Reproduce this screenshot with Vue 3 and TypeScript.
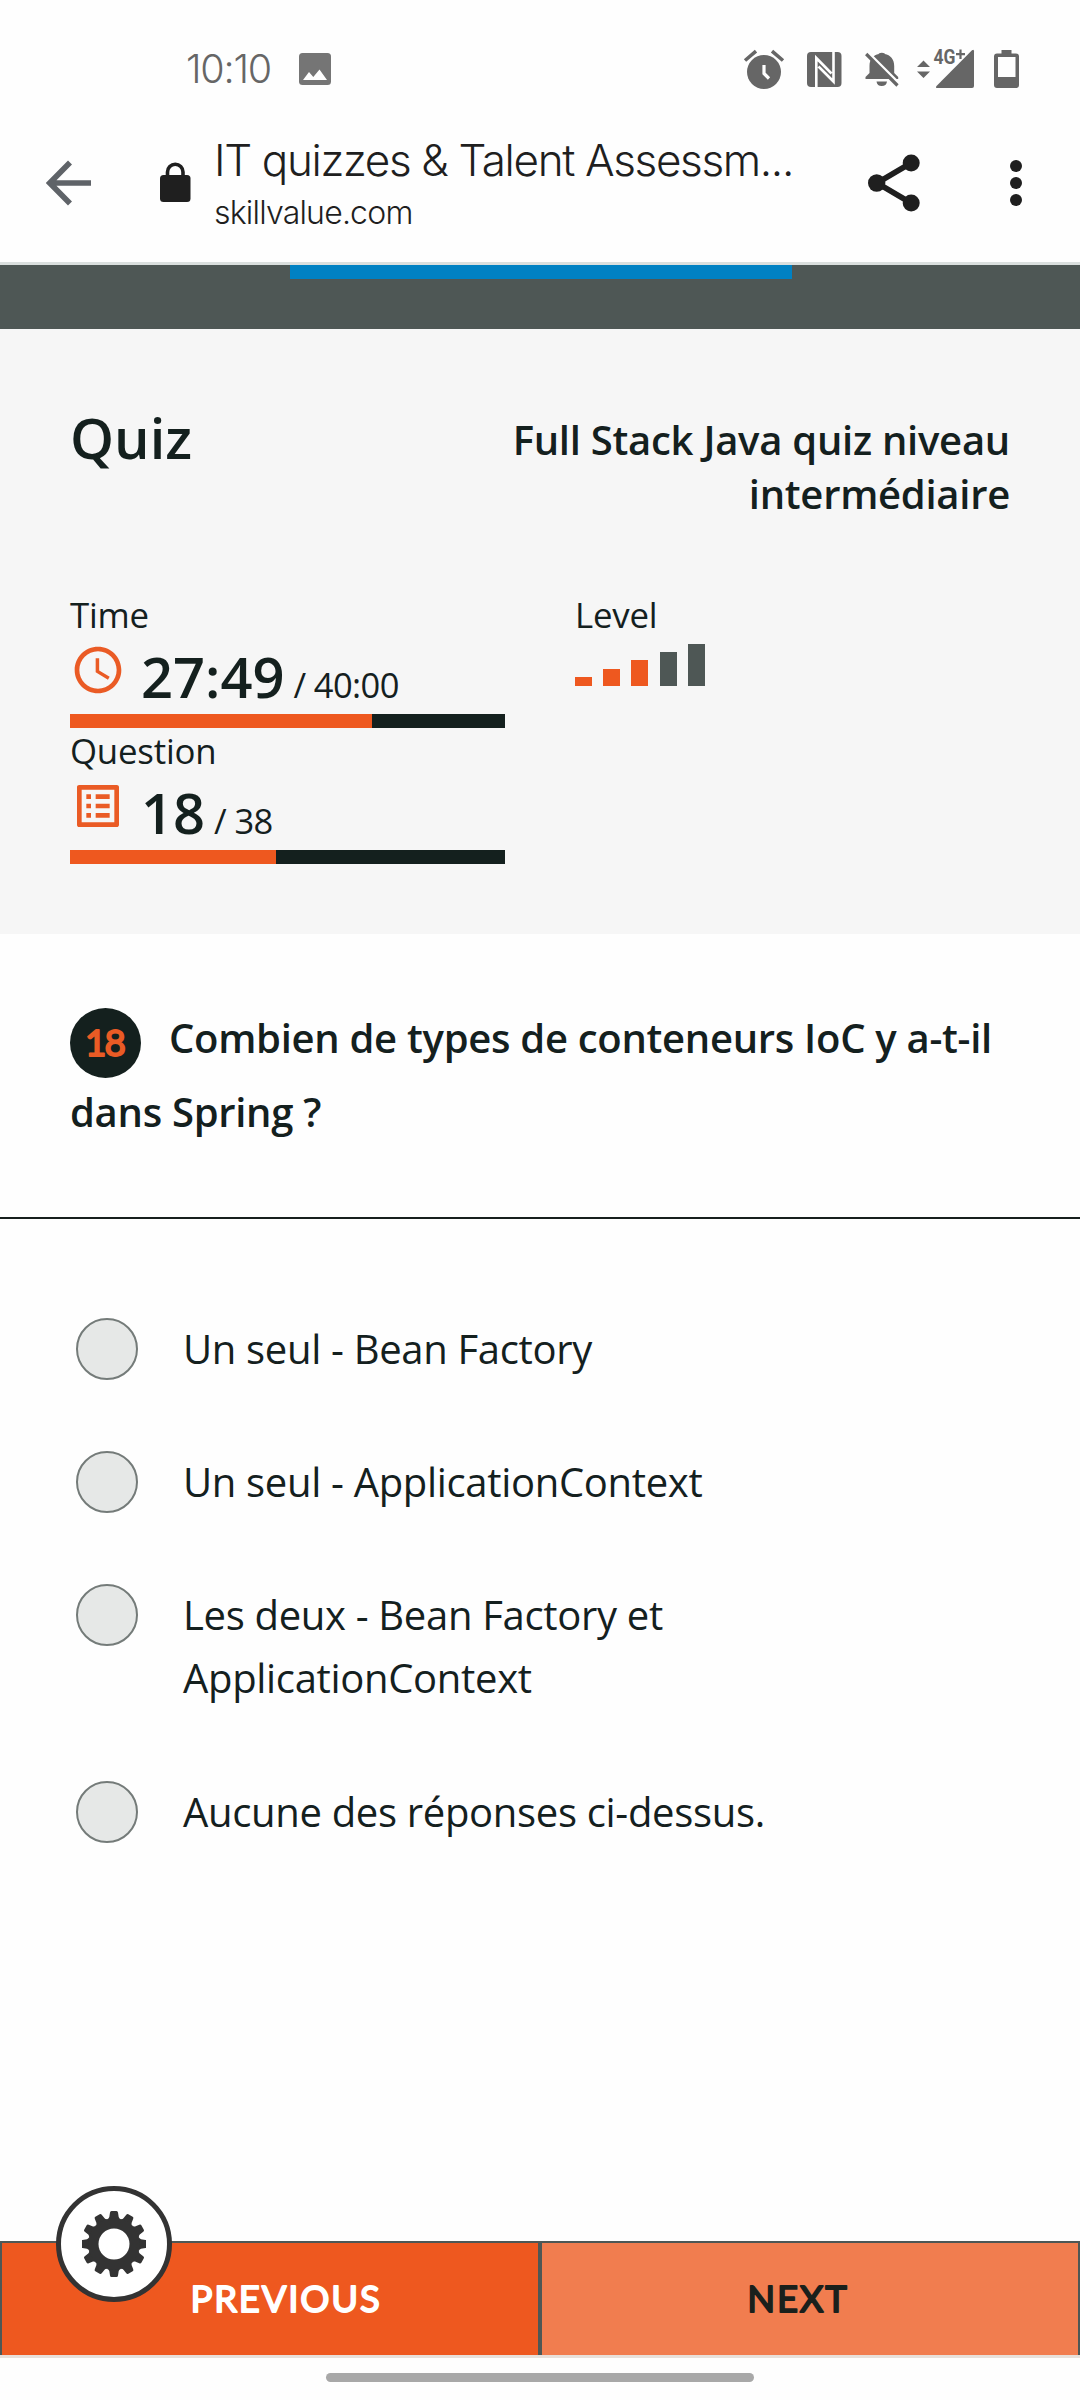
<script setup lang="ts">
interface Stat {
  label: string
  icon: 'clock' | 'list'
  value: string
  total: string
  percent: number
}

const stats: Stat[] = [
  { label: 'Time', icon: 'clock', value: '27:49', total: '40:00', percent: 69.4 },
  { label: 'Question', icon: 'list', value: '18', total: '38', percent: (18 / 38) * 100 },
]

const levels: { height: number; on: boolean }[] = [
  { height: 9, on: true },
  { height: 17, on: true },
  { height: 26, on: true },
  { height: 34, on: false },
  { height: 42, on: false },
]

const answers: string[] = [
  'Un seul - Bean Factory',
  'Un seul - ApplicationContext',
  'Les deux - Bean Factory et ApplicationContext',
  'Aucune des réponses ci-dessus.',
]

const teeth: number[] = Array.from({ length: 12 }, (_, i) => i * 30)
</script>

<template>
  <div class="screen">
    <header class="status">
      <span class="clock">10:10</span>
      <svg class="picture" width="32" height="32" viewBox="0 0 32 32">
        <rect width="32" height="32" rx="3.5" fill="#757575" />
        <path d="M4 27 10 19l4.300 5L20.500 16.500 28 27z" fill="#fff" />
      </svg>
      <svg class="indicators" width="280" height="44" viewBox="742 46 280 44" fill="#666">
        <circle cx="764" cy="72" r="17" />
        <path d="M745 60.500 756 51.200M783 60.500 772 51.200" stroke="#666" stroke-width="3.600" fill="none" />
        <path d="M764 65v8.500l5 5" stroke="#fff" stroke-width="3.200" fill="none" />
        <rect x="807" y="52" width="34.500" height="35" rx="4" />
        <path d="M816.300 87V58L831.500 73.500M833.500 52v29.500L818.500 66.500" stroke="#fff" stroke-width="2.600" fill="none" />
        <path d="M865.500 79v-2l4-4V66c0-7 4-11 9.300-12v-.500q3-1.500 6 0v.500c5.500 1 9.400 5 9.400 12v7l4 4v2zM876.500 81.500h10.500a5.300 5.300 0 0 1-10.500 0z" />
        <path d="M867.500 52.500 900 85" stroke="#fff" stroke-width="3.800" fill="none" />
        <path d="M866.200 54 897.500 85.500" stroke="#666" stroke-width="3.200" fill="none" />
        <path d="M917 67l6.500-6.500L930 67zM917 71.500h13l-6.500 6.500z" />
        <path d="M972 50.200q2-1.500 2 1V86q0 2-2 2H937.500q-2.500 0-1-2z" />
        <text x="933.500" y="64" class="net" textLength="22" lengthAdjust="spacingAndGlyphs">4G</text>
        <path d="M960.500 49.500v9.500M956 54.200h9" stroke="#666" stroke-width="2.200" />
        <path fill-rule="evenodd" d="M1001.500 50h10v3.500h4.500q3 0 3 3V85q0 3-3 3H997q-3 0-3-3V56.500q0-3 3-3h4.500zM998 57v20h17.500V57z" />
      </svg>
    </header>

    <div class="toolbar">
      <svg class="back" width="45" height="46" viewBox="0 0 45 46" fill="none" stroke="#5f6368" stroke-width="5.600">
        <path d="M24 2.500 3.800 23 24 43.500M4 23h41" />
      </svg>
      <svg class="lock" width="31" height="40" viewBox="0 0 31 40">
        <rect y="13" width="30.500" height="27" rx="3.500" fill="#1f1f1f" />
        <path d="M7.500 14.500V10a7.750 7.750 0 0 1 15.500 0v4.500" fill="none" stroke="#1f1f1f" stroke-width="3.600" />
      </svg>
      <div class="site">
        <div class="page-title">IT quizzes &amp; Talent Assessm...</div>
        <div class="host">skillvalue.com</div>
      </div>
      <svg class="share" width="52" height="58" viewBox="0 0 52 58">
        <path d="M43 9 9 29l34 20" fill="none" stroke="#1f1f1f" stroke-width="5.600" />
        <circle cx="43.200" cy="9" r="8.500" fill="#1f1f1f" />
        <circle cx="8.700" cy="29" r="8.700" fill="#1f1f1f" />
        <circle cx="43.200" cy="49" r="8.500" fill="#1f1f1f" />
      </svg>
      <svg class="more" width="12" height="48" viewBox="0 0 12 48" fill="#1f1f1f">
        <circle cx="6" cy="7" r="6" /><circle cx="6" cy="24" r="6" /><circle cx="6" cy="41" r="6" />
      </svg>
    </div>

    <div class="band"><div class="loading"></div></div>

    <section class="summary">
      <div class="heading">
        <h1>Quiz</h1>
        <h2>Full Stack Java quiz niveau intermédiaire</h2>
      </div>
      <div class="columns">
        <div class="stats">
          <div v-for="s in stats" :key="s.label" class="stat">
            <div class="label">{{ s.label }}</div>
            <div class="row">
              <svg width="56" height="56" viewBox="0 0 24 24" fill="#ea5b25">
                <path
                  v-if="s.icon === 'clock'"
                  d="M11.990 2C6.470 2 2 6.480 2 12s4.470 10 9.990 10C17.520 22 22 17.520 22 12S17.520 2 11.990 2zM12 20c-4.420 0-8-3.580-8-8s3.580-8 8-8 8 3.580 8 8-3.580 8-8 8zm.500-13H11v6l5.250 3.150.750-1.230-4.500-2.670z"
                />
                <path
                  v-else
                  d="M19 5v14H5V5h14m1.100-2H3.900c-.500 0-.900.400-.900.900v16.200c0 .400.400.900.900.900h16.200c.400 0 .900-.500.900-.900V3.900c0-.500-.500-.900-.900-.900zM11 7h6v2h-6V7zm0 4h6v2h-6v-2zm0 4h6v2h-6zM7 7h2v2H7zm0 4h2v2H7zm0 4h2v2H7z"
                />
              </svg>
              <div class="figures"><b>{{ s.value }}</b><span>/ {{ s.total }}</span></div>
            </div>
            <div class="track"><div class="fill" :style="{ width: s.percent + '%' }"></div></div>
          </div>
        </div>
        <div class="level">
          <div class="label">Level</div>
          <div class="bars">
            <i v-for="l in levels" :key="l.height" :class="{ on: l.on }" :style="{ height: l.height + 'px' }"></i>
          </div>
        </div>
      </div>
    </section>

    <section class="question">
      <svg class="badge" width="71" height="70" viewBox="0 0 71 70">
        <ellipse cx="35.500" cy="35" rx="35.500" ry="35" fill="#14201e" />
        <text x="34.500" y="48.300" class="round number" fill="#ea5b25" stroke="#ea5b25">18</text>
      </svg>
      Combien de types de conteneurs IoC y a-t-il dans Spring ?
    </section>

    <main class="answers">
      <label v-for="a in answers" :key="a" class="answer">
        <span class="radio"></span>
        <span class="text">{{ a }}</span>
      </label>
    </main>

    <footer class="actions">
      <button class="settings" aria-label="Settings">
        <svg width="64" height="66" viewBox="-32 -33 64 66">
          <g fill="#333">
            <path v-for="t in teeth" :key="t" :transform="`rotate(${t})`" d="M-8-24.500Q-5-25-4.700-27L-4-31.500Q-3.800-33-2.500-33h5Q3.800-33 4-31.500L4.700-27Q5-25 8-24.500z" />
            <circle r="25.700" />
          </g>
          <circle r="15.500" fill="#fff" />
        </svg>
      </button>
      <button class="prev">
        <svg width="210" height="60" viewBox="0 0 210 60">
          <text x="106" y="43" class="round" fill="#fff" stroke="#fff">PREVIOUS</text>
        </svg>
      </button>
      <button class="next">
        <svg width="120" height="60" viewBox="0 0 120 60">
          <text x="61" y="43" class="round" fill="#1a201c" stroke="#1a201c">NEXT</text>
        </svg>
      </button>
    </footer>
    <div class="gesture"><div class="handle"></div></div>
  </div>
</template>

<style>
body {
  margin: 0;
  background: #fefefe;
}
</style>

<style scoped>
.screen {
  width: 1080px;
  height: 2400px;
  display: flex;
  flex-direction: column;
  overflow: hidden;
  background: #fefefe;
  color: #14201e;
  font-family: "Open Sans", "Noto Sans", sans-serif;
}
svg {
  display: block;
  flex: none;
}
.status {
  height: 100px;
  display: flex;
  padding: 46px 58px 0 186px;
  box-sizing: border-box;
  font-family: Inter, "Liberation Sans", sans-serif;
}
.clock {
  width: 113px;
  font-size: 39.500px;
  line-height: 47px;
  font-weight: 300;
  letter-spacing: -1.2px;
  color: #666;
}
.picture {
  margin-top: 7px;
}
.indicators {
  margin-left: auto;
}
.net {
  font: 700 19.500px Roboto, sans-serif;
}
.toolbar {
  height: 162px;
  display: flex;
  align-items: flex-start;
  padding: 0 58px 0 46px;
  box-sizing: border-box;
}
.back {
  margin-top: 60px;
}
.lock {
  margin: 62px 23px 0 69px;
}
.site {
  flex: 1;
  padding-top: 32px;
  white-space: nowrap;
  color: #1f1f1f;
  font-family: Inter, "Liberation Sans", sans-serif;
  font-weight: 300;
}
.page-title {
  font-size: 44px;
  line-height: 56px;
  letter-spacing: -1.360px;
}
.host {
  font-size: 32px;
  line-height: 50px;
  letter-spacing: -0.800px;
}
.share {
  margin: 54px 90px 0 0;
}
.more {
  margin-top: 59px;
}
.band {
  height: 64px;
  border-top: 3px solid #dadfde;
  background: #4e5755;
}
.loading {
  width: 502px;
  height: 13.500px;
  margin-left: 290px;
  background: #0081c3;
}
.summary {
  height: 605px;
  padding: 70px 70px 0;
  box-sizing: border-box;
  background: #f6f6f6;
}
.heading {
  height: 193px;
  display: flex;
  justify-content: space-between;
  align-items: flex-start;
}
h1 {
  margin: 0;
  font-size: 56px;
  line-height: 76px;
  font-weight: 600;
}
h2 {
  width: 520px;
  margin: 14px 0 0;
  font-size: 40px;
  line-height: 54px;
  font-weight: 600;
  letter-spacing: -0.260px;
  text-align: right;
}
.columns {
  display: flex;
  gap: 70px;
}
.stats {
  width: 435px;
}
.label {
  height: 44px;
  font-size: 34.800px;
  line-height: 46px;
  letter-spacing: -0.200px;
}
.row {
  height: 78px;
  display: flex;
  gap: 15px;
}
.row svg {
  margin-top: 6px;
}
.figures {
  line-height: 80px;
  font-size: 34.500px;
  white-space: nowrap;
}
.figures b {
  font-size: 56px;
  font-weight: 600;
  margin-right: 9px;
}
.figures span {
  letter-spacing: -0.600px;
}
.track {
  height: 14px;
  background: #14201e;
}
.fill {
  height: 14px;
  background: #ee581f;
}
.bars {
  height: 50px;
  display: flex;
  align-items: flex-end;
  gap: 11.200px;
}
.bars i {
  width: 17px;
  background: #4e5755;
}
.bars i.on {
  background: #ee581f;
}
.question {
  height: 285px;
  padding: 67px 60px 0 70px;
  box-sizing: border-box;
  border-bottom: 2px solid #171f1d;
  font-size: 40px;
  line-height: 74px;
  font-weight: 600;
  letter-spacing: -0.290px;
}
.badge {
  float: left;
  margin: 7px 28px -10px 0;
}
.round {
  font-family: Lato, sans-serif;
  font-size: 36.500px;
  font-weight: 400;
  letter-spacing: 1.800px;
  text-anchor: middle;
  stroke-width: 1.800px;
  stroke-linejoin: round;
}
.round.number {
  font-size: 37px;
  letter-spacing: -2px;
}
.answers {
  flex: 1;
  display: flex;
  flex-direction: column;
  gap: 70px;
  padding: 98px 76px 0;
}
.answer {
  display: flex;
  align-items: flex-start;
  gap: 45px;
}
.radio {
  flex: none;
  width: 62px;
  height: 62px;
  margin-top: 1px;
  box-sizing: border-box;
  border: 2px solid #747b79;
  border-radius: 50%;
  background: #e6e8e7;
}
.text {
  width: 620px;
  font-size: 40px;
  line-height: 63px;
  letter-spacing: -0.320px;
}
.answer:last-child {
  padding-top: 1px;
}
.actions {
  position: relative;
  height: 114px;
  display: flex;
  border-bottom: 3px solid #e8e0da;
}
button {
  padding: 0;
  cursor: pointer;
}
.prev,
.next {
  width: 540px;
  box-sizing: border-box;
  display: flex;
  align-items: center;
  border: solid #4e5755;
  border-width: 2px 2px 0;
}
.prev {
  padding-left: 178px;
  background: #ee581f;
}
.next {
  padding-left: 195px;
  background: #f17d4f;
}
.settings {
  position: absolute;
  left: 56px;
  top: -55px;
  width: 116px;
  height: 116px;
  box-sizing: border-box;
  display: flex;
  align-items: center;
  justify-content: center;
  border: 5px solid #333;
  border-radius: 50%;
  background: #fff;
}
.gesture {
  height: 42px;
  display: flex;
  justify-content: center;
}
.handle {
  width: 428px;
  height: 9px;
  margin-top: 15px;
  border-radius: 5px;
  background: #a8a8a8;
}
</style>
